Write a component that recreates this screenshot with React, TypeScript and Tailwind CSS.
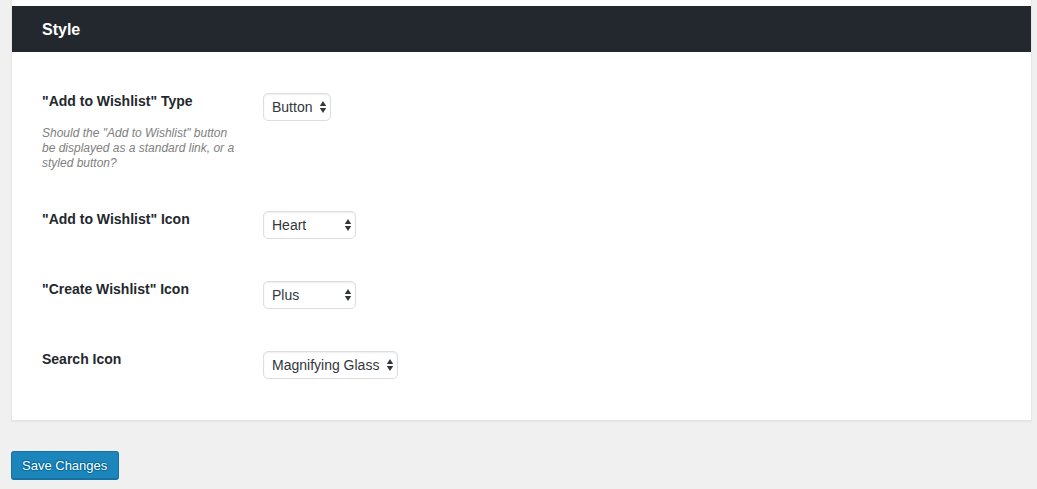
import { clsx } from "clsx";

type Setting = {
  id: string;
  label: string;
  description?: string;
  options: string[];
  width: string;
};

const settings: Setting[] = [
  {
    id: "add-to-wishlist-type",
    label: '"Add to Wishlist" Type',
    description:
      'Should the "Add to Wishlist" button be displayed as a standard link, or a styled button?',
    options: ["Button", "Link"],
    width: "w-[68px]",
  },
  {
    id: "add-to-wishlist-icon",
    label: '"Add to Wishlist" Icon',
    options: ["Heart", "Star", "Bookmark"],
    width: "w-[93px]",
  },
  {
    id: "create-wishlist-icon",
    label: '"Create Wishlist" Icon',
    options: ["Plus", "Heart", "Star"],
    width: "w-[93px]",
  },
  {
    id: "search-icon",
    label: "Search Icon",
    options: ["Magnifying Glass", "None"],
    width: "w-[135px]",
  },
];

function SelectArrows() {
  return (
    <svg
      className="pointer-events-none absolute top-2 right-1 h-3 w-2"
      viewBox="0 0 8 12"
      fill="#32373c"
      aria-hidden="true"
    >
      <path d="M4 0 7.2 5H.8z" />
      <path d="M4 12 7.2 7H.8z" />
    </svg>
  );
}

function SettingRow({ id, label, description, options, width }: Setting) {
  return (
    <div className="flex min-h-[30px] items-start">
      <div className="w-[221px] shrink-0 pr-6">
        <label htmlFor={id} className="block text-sm leading-4 font-bold text-[#23282d]">
          {label}
        </label>
        {description && (
          <p
            id={`${id}-description`}
            className="mt-[17px] text-xs leading-[15px] text-[#808080] italic"
          >
            {description}
          </p>
        )}
      </div>
      <div className={clsx("relative", width)}>
        <select
          id={id}
          aria-describedby={description ? `${id}-description` : undefined}
          className="block h-7 w-full appearance-none rounded-[5px] border border-[#dddddd] bg-white pr-3 pl-2 text-sm text-[#32373c] shadow-[inset_0_1px_2px_rgba(0,0,0,0.07)]"
        >
          {options.map((option) => (
            <option key={option}>{option}</option>
          ))}
        </select>
        <SelectArrows />
      </div>
    </div>
  );
}

export default function App() {
  return (
    <form
      className="min-h-screen bg-[#f0f0f0] pr-[5px] pb-2 pl-[11px] font-['Helvetica_Neue','Liberation_Sans',Arial,sans-serif]"
      onSubmit={(event) => event.preventDefault()}
    >
      <section className="border border-t-0 border-[#e5e5e5] bg-white pt-1.5 shadow-[0_1px_1px_rgba(0,0,0,0.04)]">
        <h2 className="bg-[#23282f] px-[30px] pt-3 pb-2.5 text-base font-bold text-white">Style</h2>
        <div className="flex flex-col gap-10 px-[30px] pt-[41px] pb-[39px]">
          {settings.map((setting) => (
            <SettingRow key={setting.id} {...setting} />
          ))}
        </div>
      </section>
      <button
        type="submit"
        className="mt-[30px] block h-[29px] rounded-[3px] border border-b-2 border-[#15719f] bg-[#1c85bb] pt-0.5 pr-[11px] pl-2.5 text-[13px] text-white [text-shadow:0_-1px_1px_#006799,1px_0_1px_#006799,0_1px_1px_#006799,-1px_0_1px_#006799]"
      >
        Save Changes
      </button>
    </form>
  );
}
